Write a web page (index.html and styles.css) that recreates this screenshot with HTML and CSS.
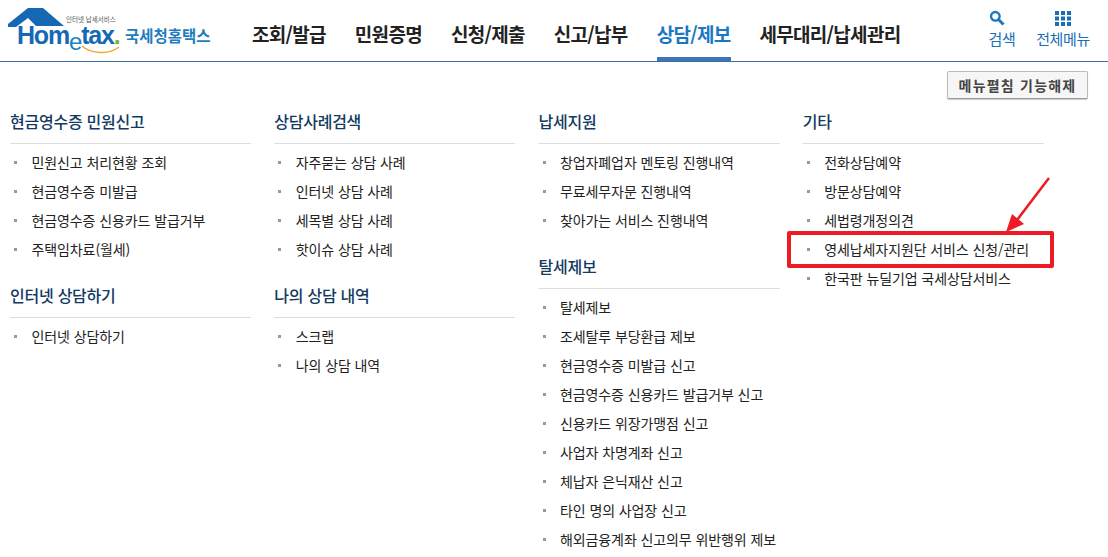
FILE: index.html
```html
<!DOCTYPE html>
<html lang="ko">
    <head>
        <meta charset="utf-8">
        <link rel="stylesheet" href="styles.css">
    </head>
    <body>
        <header class="top">
            <a class="logo">
                <svg class="logo-house" width="58" height="20" viewBox="0 0 58 20">
                    <path d="M0 16 L20 0 H35 L56 18 H28 L20 10 L8 19 H0 Z" fill="#1569b3"/>
                </svg>
                <span class="logo-small">인터넷 납세서비스</span>
                <span class="logo-word">Hom<i>e</i>tax<b>.</b></span>
                <svg class="logo-smile" width="40" height="10" viewBox="0 0 40 10">
                    <path d="M1 1 C10 9 28 10 38 2" fill="none" stroke="#f0a833" stroke-width="1.6"/>
                </svg>
                <span class="logo-name">국세청홈택스</span>
            </a>
            <nav class="gnb">
                <a>조회/발급</a>
                <a>민원증명</a>
                <a>신청/제출</a>
                <a>신고/납부</a>
                <a class="on">상담/제보</a>
                <a>세무대리/납세관리</a>
            </nav>
            <div class="tools">
                <a class="tool">
                    <svg class="ico-search" width="16" height="16" viewBox="0 0 16 16">
                        <circle cx="6.3" cy="6.3" r="4.3" fill="none" stroke="#1a78c2" stroke-width="2.4"/>
                        <path d="M9.5 9.5 L14.5 14.5" stroke="#1a78c2" stroke-width="3"/>
                    </svg>
                    <span>검색</span>
                </a>
                <a class="tool">
                    <svg width="16" height="16" viewBox="0 0 16 16" fill="#1a6fb5">
                        <rect x="0" y="1" width="4" height="4"/><rect x="6" y="1" width="4" height="4"/><rect x="12" y="1" width="4" height="4"/>
                        <rect x="0" y="6.5" width="4" height="4"/><rect x="6" y="6.5" width="4" height="4"/><rect x="12" y="6.5" width="4" height="4"/>
                        <rect x="0" y="12" width="4" height="4"/><rect x="6" y="12" width="4" height="4"/><rect x="12" y="12" width="4" height="4"/>
                    </svg>
                    <span>전체메뉴</span>
                </a>
            </div>
        </header>

        <div class="bar">
            <button class="btn">메뉴펼침 기능해제</button>
        </div>

        <div class="menu">
            <div class="col">
                <h3>현금영수증 민원신고</h3>
                <ul>
                    <li>민원신고 처리현황 조회</li>
                    <li>현금영수증 미발급</li>
                    <li>현금영수증 신용카드 발급거부</li>
                    <li>주택임차료(월세)</li>
                </ul>
                <h3>인터넷 상담하기</h3>
                <ul>
                    <li>인터넷 상담하기</li>
                </ul>
            </div>
            <div class="col">
                <h3>상담사례검색</h3>
                <ul>
                    <li>자주묻는 상담 사례</li>
                    <li>인터넷 상담 사례</li>
                    <li>세목별 상담 사례</li>
                    <li>핫이슈 상담 사례</li>
                </ul>
                <h3>나의 상담 내역</h3>
                <ul>
                    <li>스크랩</li>
                    <li>나의 상담 내역</li>
                </ul>
            </div>
            <div class="col">
                <h3>납세지원</h3>
                <ul>
                    <li>창업자폐업자 멘토링 진행내역</li>
                    <li>무료세무자문 진행내역</li>
                    <li>찾아가는 서비스 진행내역</li>
                </ul>
                <h3>탈세제보</h3>
                <ul>
                    <li>탈세제보</li>
                    <li>조세탈루 부당환급 제보</li>
                    <li>현금영수증 미발급 신고</li>
                    <li>현금영수증 신용카드 발급거부 신고</li>
                    <li>신용카드 위장가맹점 신고</li>
                    <li>사업자 차명계좌 신고</li>
                    <li>체납자 은닉재산 신고</li>
                    <li>타인 명의 사업장 신고</li>
                    <li>해외금융계좌 신고의무 위반행위 제보</li>
                </ul>
            </div>
            <div class="col">
                <h3>기타</h3>
                <ul>
                    <li>전화상담예약</li>
                    <li>방문상담예약</li>
                    <li>세법령개정의견</li>
                    <li class="marked">영세납세자지원단 서비스 신청/관리</li>
                    <li>한국판 뉴딜기업 국세상담서비스</li>
                </ul>
            </div>
        </div>

        <svg class="arrow" width="50" height="60" viewBox="0 0 50 60">
            <path d="M44 1 L9 47" stroke="#ed1c24" stroke-width="2.5"/>
            <path d="M1 55 L7 37 L19 47 Z" fill="#ed1c24"/>
        </svg>
    </body>
</html>
```

FILE: styles.css
```css
html, body{
    margin: 0;
    padding: 0;
    height: 557px;
    overflow: hidden;
}
body{
    position: relative;
    background: #fff;
    color: #222;
    font-family: "Noto Sans CJK KR", "Noto Sans", sans-serif;
}
body *{
    box-sizing: border-box;
}

/* header */
.top{
    position: relative;
    display: flex;
    align-items: flex-start;
    height: 62px;
    border-bottom: 1px solid #3a6ea5;
}
.logo{
    position: relative;
    display: block;
    flex: none;
    width: 252px;
    height: 61px;
}
.logo-house{
    position: absolute;
    left: 8px;
    top: 8px;
}
.logo-small{
    position: absolute;
    left: 66px;
    top: 16px;
    font-size: 6.5px;
    line-height: 7px;
    color: #555;
    white-space: nowrap;
}
.logo-word{
    position: absolute;
    left: 17px;
    top: 25px;
    font: bold 25px/20px "Liberation Sans", sans-serif;
    letter-spacing: -1.2px;
    color: #1569b3;
}
.logo-word i{
    position: relative;
    top: 6px;
    font-size: 24px;
    font-style: normal;
    font-weight: normal;
    color: #1a7fc4;
}
.logo-word b{
    color: #7ab51d;
}
.logo-smile{
    position: absolute;
    left: 81px;
    top: 45px;
}
.logo-name{
    position: absolute;
    left: 125px;
    top: 25px;
    font-size: 15.5px;
    line-height: 20px;
    font-weight: 700;
    color: #1f7cbd;
    white-space: nowrap;
}
.gnb{
    display: flex;
    gap: 29px;
    height: 61px;
}
.gnb a{
    display: block;
    height: 61px;
    padding-top: 21px;
    font-size: 19px;
    line-height: 26px;
    font-weight: 700;
    letter-spacing: -.7px;
    color: #222;
    white-space: nowrap;
}
.gnb a.on{
    color: #1a78c2;
    border-bottom: 4px solid #3f74b5;
}
.tools{
    display: flex;
    gap: 1px;
    margin-left: auto;
    margin-right: 15px;
}
.tool{
    display: flex;
    flex-direction: column;
    align-items: center;
    gap: 3px;
    width: 60px;
    padding-top: 10px;
    font-size: 15px;
    line-height: 20px;
    letter-spacing: -.4px;
    color: #1a6fb5;
}
.ico-search{
    margin-left: -10px;
}

/* button row */
.bar{
    display: flex;
    justify-content: flex-end;
    padding: 9px 20px 0 0;
    height: 38px;
}
.btn{
    width: 141px;
    height: 28px;
    padding: 0;
    background: #f6f6f6;
    border: 1px solid #bbb;
    border-bottom-color: #999;
    border-radius: 2px;
    box-shadow: 0 1px 1px rgba(0,0,0,.2);
    font: 700 14px "Noto Sans CJK KR", sans-serif;
    letter-spacing: 1.2px;
    color: #444;
}

/* menu columns */
.menu{
    display: flex;
    gap: 23.25px;
    padding: 8px 0 0 10px;
}
.col{
    width: 241px;
    flex: none;
}
.col h3{
    margin: 0 0 4px;
    height: 36px;
    padding-top: 2px;
    border-bottom: 1px solid #ddd;
    font-size: 16px;
    line-height: 22px;
    font-weight: 500;
    letter-spacing: -.25px;
    color: #123a62;
}
.col ul{
    list-style-type: none;
    margin: 0 0 18px;
    padding: 0;
}
.col li{
    position: relative;
    height: 29px;
    padding-left: 21.5px;
    font-size: 14px;
    line-height: 29px;
    letter-spacing: -.1px;
    color: #222;
    white-space: nowrap;
}
.col li:before{
    content: "";
    position: absolute;
    left: 4px;
    top: 13px;
    width: 3px;
    height: 3px;
    background: #999;
}

/* red annotation, pseudo elements are content-box */
.marked:after{
    content: "";
    position: absolute;
    left: -16px;
    top: -4px;
    width: 259px;
    height: 29px;
    border: 4px solid #ed1c24;
    border-radius: 2px;
}
.arrow{
    position: absolute;
    left: 1005px;
    top: 177px;
}
```
